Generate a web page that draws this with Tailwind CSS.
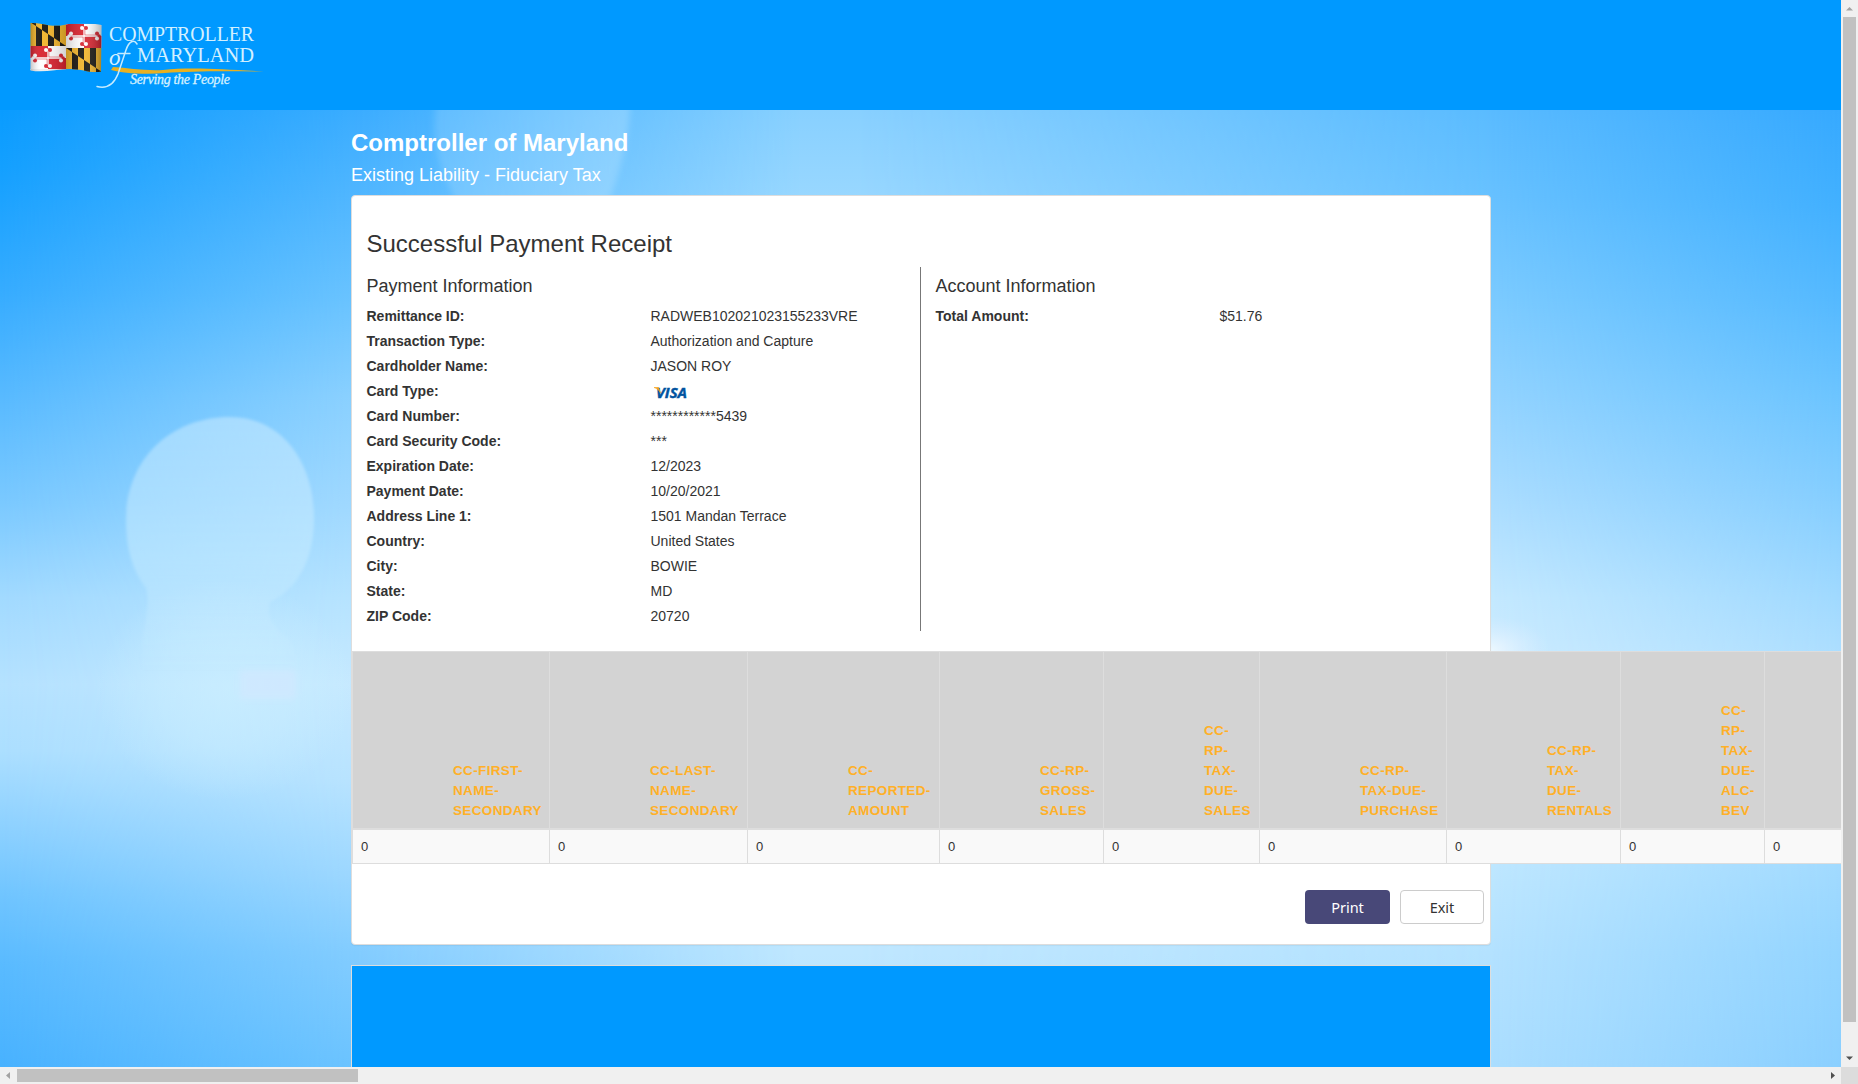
<!DOCTYPE html>
<html lang="en">
<head>
<meta charset="utf-8">
<title>Comptroller of Maryland</title>
<script src="https://cdn.jsdelivr.net/npm/@tailwindcss/browser@4"></script>
</head>
<body class="grid h-[1084px] w-[1858px] grid-cols-[1841px_17px] grid-rows-[1067px_17px] overflow-hidden bg-[#f0f0f0] font-['Liberation_Sans',Arial,sans-serif] text-sm text-[#333]">

<main class="relative isolate overflow-hidden">
  <!-- sky backdrop: vertical colour ramps blended from column to column -->
  <svg class="absolute inset-0 -z-10" width="1841" height="1067" viewBox="0 0 1841 1067">
    <defs>
      <linearGradient id="c0" gradientUnits="userSpaceOnUse" x1="0" y1="110" x2="0" y2="1067"><stop offset="0" stop-color="#0a9cff"/><stop offset=".06" stop-color="#14a0ff"/><stop offset=".19" stop-color="#36acff"/><stop offset=".3" stop-color="#58baff"/><stop offset=".41" stop-color="#7ac9ff"/><stop offset=".51" stop-color="#a2daff"/><stop offset=".6" stop-color="#b5e2ff"/><stop offset=".67" stop-color="#acdfff"/><stop offset=".75" stop-color="#8dd1ff"/><stop offset=".82" stop-color="#70c5ff"/><stop offset=".89" stop-color="#5abbff"/><stop offset="1" stop-color="#48b2ff"/></linearGradient>
      <linearGradient id="c1" gradientUnits="userSpaceOnUse" x1="0" y1="110" x2="0" y2="1067"><stop offset="0" stop-color="#3aacff"/><stop offset=".1" stop-color="#52b7ff"/><stop offset=".2" stop-color="#6ac3ff"/><stop offset=".3" stop-color="#8ad0ff"/><stop offset=".41" stop-color="#9fd8ff"/><stop offset=".51" stop-color="#b6e3ff"/><stop offset=".6" stop-color="#c6e9ff"/><stop offset=".7" stop-color="#b8e3ff"/><stop offset=".79" stop-color="#9fd8ff"/><stop offset=".88" stop-color="#82ccff"/><stop offset="1" stop-color="#6bc3ff"/></linearGradient>
      <linearGradient id="c2" gradientUnits="userSpaceOnUse" x1="0" y1="110" x2="0" y2="1067"><stop offset="0" stop-color="#88d0ff"/><stop offset=".09" stop-color="#98d7ff"/><stop offset=".5" stop-color="#c6eaff"/><stop offset=".88" stop-color="#bfe7ff"/><stop offset="1" stop-color="#b4e2ff"/></linearGradient>
      <linearGradient id="c3" gradientUnits="userSpaceOnUse" x1="0" y1="110" x2="0" y2="1067"><stop offset="0" stop-color="#5abbff"/><stop offset=".09" stop-color="#67c1ff"/><stop offset=".2" stop-color="#7ccbff"/><stop offset=".3" stop-color="#92d3ff"/><stop offset=".41" stop-color="#abddff"/><stop offset=".51" stop-color="#c4e9ff"/><stop offset=".58" stop-color="#cdecff"/><stop offset=".79" stop-color="#bee7ff"/><stop offset=".88" stop-color="#b4e2ff"/><stop offset="1" stop-color="#abdeff"/></linearGradient>
      <linearGradient id="c4" gradientUnits="userSpaceOnUse" x1="0" y1="110" x2="0" y2="1067"><stop offset="0" stop-color="#36a9ff"/><stop offset=".1" stop-color="#42b0ff"/><stop offset=".2" stop-color="#55b9ff"/><stop offset=".3" stop-color="#6cc4ff"/><stop offset=".41" stop-color="#86ceff"/><stop offset=".51" stop-color="#a0d9ff"/><stop offset=".58" stop-color="#afdfff"/><stop offset=".79" stop-color="#a1daff"/><stop offset=".88" stop-color="#93d4ff"/><stop offset="1" stop-color="#8acfff"/></linearGradient>
      <linearGradient id="f"><stop offset="0" stop-color="#000"/><stop offset="1" stop-color="#fff"/></linearGradient>
      <linearGradient id="g1" gradientUnits="userSpaceOnUse" x1="0" x2="351" y1="0" y2="0" href="#f"/>
      <linearGradient id="g2" gradientUnits="userSpaceOnUse" x1="351" x2="800" y1="0" y2="0" href="#f"/>
      <linearGradient id="g3" gradientUnits="userSpaceOnUse" x1="860" x2="1490" y1="0" y2="0" href="#f"/>
      <linearGradient id="g4" gradientUnits="userSpaceOnUse" x1="1490" x2="1841" y1="0" y2="0" href="#f"/>
      <mask id="m1"><rect width="1841" height="1067" fill="url(#g1)"/></mask>
      <mask id="m2"><rect width="1841" height="1067" fill="url(#g2)"/></mask>
      <mask id="m3"><rect width="1841" height="1067" fill="url(#g3)"/></mask>
      <mask id="m4"><rect width="1841" height="1067" fill="url(#g4)"/></mask>
      <linearGradient id="person" gradientUnits="userSpaceOnUse" x1="0" y1="415" x2="0" y2="670"><stop offset="0" stop-color="#d5efff" stop-opacity=".48"/><stop offset=".55" stop-color="#d0f0ff" stop-opacity=".42"/><stop offset=".8" stop-color="#d0f0ff" stop-opacity=".22"/><stop offset="1" stop-color="#d0f0ff" stop-opacity="0"/></linearGradient>
      <radialGradient id="torso"><stop offset="0" stop-color="#cdf0ff" stop-opacity=".6"/><stop offset=".5" stop-color="#cdf0ff" stop-opacity=".4"/><stop offset="1" stop-color="#cdf0ff" stop-opacity="0"/></radialGradient>
      <linearGradient id="head2" gradientUnits="userSpaceOnUse" x1="430" y1="0" x2="630" y2="0"><stop offset="0" stop-color="#d0eeff" stop-opacity=".18"/><stop offset="1" stop-color="#d0eeff" stop-opacity=".28"/></linearGradient>
      <radialGradient id="glow"><stop offset="0" stop-color="#fff" stop-opacity=".65"/><stop offset="1" stop-color="#e6eeff" stop-opacity="0"/></radialGradient>
      <filter id="soft" x="-10%" y="-10%" width="120%" height="120%"><feGaussianBlur stdDeviation="1.5"/></filter>
      <filter id="softer" x="-20%" y="-20%" width="140%" height="140%"><feGaussianBlur stdDeviation="3"/></filter>
    </defs>
    <rect width="1841" height="1067" fill="url(#c0)"/>
    <rect width="1841" height="1067" fill="url(#c1)" mask="url(#m1)"/>
    <rect width="1841" height="1067" fill="url(#c2)" mask="url(#m2)"/>
    <rect width="1841" height="1067" fill="url(#c3)" mask="url(#m3)"/>
    <rect width="1841" height="1067" fill="url(#c4)" mask="url(#m4)"/>
    <ellipse cx="225" cy="690" rx="130" ry="110" fill="url(#torso)"/>
    <path d="M126 520C126 460 170 417 230 417C282 417 314 462 314 518C314 562 296 590 270 602C266 616 272 628 290 640L304 680H142L142 640C146 620 150 600 146 588C132 570 126 548 126 520Z" fill="url(#person)" filter="url(#soft)"/>
    <path d="M438 90H630C632 130 622 165 606 210H462C440 175 428 140 438 90Z" fill="url(#head2)" filter="url(#softer)"/>
    <rect x="240" y="670" width="56" height="29" fill="#d2e8ff" opacity=".7" filter="url(#softer)"/>
    <ellipse cx="1490" cy="650" rx="60" ry="34" fill="url(#glow)"/>
  </svg>

  <header class="h-[110px] bg-[#0099ff]">
    <svg class="block" width="300" height="110" viewBox="0 0 300 110">
      <defs>
        <clipPath id="flag"><path d="M30.500 23C42 22 50 28 64 25C78 22 90 23 101.500 25L101 71.500C92 74 83 69 70 69C56 69 44 73 30.500 70.500Z"/></clipPath>
        <g id="calvert">
          <rect width="36" height="24" fill="#f2b52a"/>
          <path d="M0 0H6V4L0 0ZM12 0H18V12L12 8ZM24 0H30V20L24 16ZM6 4L12 8V24H6ZM18 12L24 16V24H18ZM30 20L36 24H30Z" fill="#17150f"/>
        </g>
        <g id="crossland">
          <rect width="36" height="24" fill="#fff"/>
          <path d="M0 0H18V12H36V24H18V12H0Z" fill="#d8222e"/>
          <path d="M18 2.500V12H33M18 12" fill="none" stroke="#d8222e" stroke-width="2.400"/>
          <path d="M3 12H18V22" fill="none" stroke="#d8222e" stroke-width="2.400"/>
          <path d="M18 3V12H4M18 12H32M18 12V21" fill="none" stroke="#fff" stroke-width="1.300"/>
          <g fill="#d8222e"><circle cx="20" cy="4" r="2"/><circle cx="31" cy="9.600" r="2"/><circle cx="33" cy="12" r="1.800"/><circle cx="5" cy="14.400" r="2"/><circle cx="16" cy="20" r="2"/></g>
          <g fill="#fff"><circle cx="16" cy="4" r="2"/><circle cx="5" cy="9.600" r="2"/><circle cx="3" cy="12" r="1.700"/><circle cx="31" cy="14.400" r="2"/><circle cx="20" cy="20" r="2"/></g>
        </g>
        <linearGradient id="shade"><stop offset="0" stop-color="#000" stop-opacity=".25"/><stop offset=".15" stop-color="#fff" stop-opacity=".05"/><stop offset=".5" stop-color="#000" stop-opacity=".18"/><stop offset=".75" stop-color="#fff" stop-opacity=".08"/><stop offset="1" stop-color="#000" stop-opacity=".3"/></linearGradient>
      </defs>
      <g clip-path="url(#flag)">
        <use href="#calvert" x="30" y="22" />
        <use href="#crossland" x="66" y="24"/>
        <use href="#crossland" x="30" y="46"/>
        <rect x="30" y="69" width="36" height="4" fill="#eee"/>
        <use href="#calvert" x="66" y="48"/>
        <rect x="30" y="20" width="72" height="54" fill="url(#shade)"/>
      </g>
      <path d="M113 67C128 68 145 71 163 70C190 67 220 69 264 71.500C225 71 190 71 165 73C145 75 122 73 111 70Z" fill="#e8b021"/>
      <g fill="#d3f0ff" font-family="'Liberation Serif',serif">
        <text x="109" y="41" font-size="20.500" textLength="145" lengthAdjust="spacingAndGlyphs">COMPTROLLER</text>
        <text x="137" y="61.800" font-size="20" textLength="117" lengthAdjust="spacingAndGlyphs">MARYLAND</text>
        <text x="130" y="83.500" font-size="14" font-style="italic" stroke="#d3f0ff" stroke-width=".3" textLength="100" lengthAdjust="spacing">Serving the People</text>
        <text x="109" y="65" font-size="23" font-style="italic">o</text>
      </g>
      <path d="M137 44C134 39 129 41 126 50L118 74C114 84 107 89 97 86.500M118 53.500H130" fill="none" stroke="#c5ebff" stroke-width="1.500" stroke-linecap="round"/>
    </svg>
  </header>

  <div class="ml-[351px] w-[1140px]">
    <h1 class="pt-[19px] text-2xl leading-[28px] font-bold text-white">Comptroller of Maryland</h1>
    <h2 class="mt-[7px] h-[31px] text-lg leading-[22px] text-white">Existing Liability - Fiduciary Tax</h2>

    <section class="h-[750px] rounded border border-[#ddd] bg-white shadow-[0_1px_1px_rgba(0,0,0,0.05)]">
      <h3 class="h-[71px] pt-[34px] pl-[14.500px] text-2xl leading-[28px]">Successful Payment Receipt</h3>
      <div class="flex h-[364px]">
        <div class="w-[569px] border-r border-[#777] pl-[14.500px]">
          <h4 class="h-[37px] pt-[9px] text-lg leading-5">Payment Information</h4>
          <dl class="grid auto-rows-[25px] grid-cols-[284px_1fr] leading-[25px] [&>dt]:font-bold">
            <dt>Remittance ID:</dt><dd>RADWEB102021023155233VRE</dd>
            <dt>Transaction Type:</dt><dd>Authorization and Capture</dd>
            <dt>Cardholder Name:</dt><dd>JASON ROY</dd>
            <dt>Card Type:</dt>
            <dd>
              <svg class="block" width="40" height="25" viewBox="0 0 40 25">
                <text x="5" y="19" font-size="14" font-weight="bold" font-style="italic" font-family="'Open Sans',sans-serif" fill="#00539f" stroke="#00539f" stroke-width=".4" textLength="31" lengthAdjust="spacingAndGlyphs">VISA</text>
                <path d="M3 8.500H7.500L9.500 14C8 11 6 9.500 3 8.500Z" fill="#f7a21b" stroke="#f7a21b" stroke-width=".6"/>
              </svg>
            </dd>
            <dt>Card Number:</dt><dd>************5439</dd>
            <dt>Card Security Code:</dt><dd>***</dd>
            <dt>Expiration Date:</dt><dd>12/2023</dd>
            <dt>Payment Date:</dt><dd>10/20/2021</dd>
            <dt>Address Line 1:</dt><dd>1501 Mandan Terrace</dd>
            <dt>Country:</dt><dd>United States</dd>
            <dt>City:</dt><dd>BOWIE</dd>
            <dt>State:</dt><dd>MD</dd>
            <dt>ZIP Code:</dt><dd>20720</dd>
          </dl>
        </div>
        <div class="flex-1 pl-[14.500px]">
          <h4 class="h-[37px] pt-[9px] text-lg leading-5">Account Information</h4>
          <dl class="grid grid-cols-[284px_1fr] leading-[25px]">
            <dt class="font-bold">Total Amount:</dt><dd>$51.76</dd>
          </dl>
        </div>
      </div>

      <table class="mt-5 w-[1573px] table-fixed border-separate border-spacing-0 border-t border-l border-[#ddd] text-left">
        <colgroup><col class="w-[197px]"><col class="w-[198px]"><col class="w-[192px]"><col class="w-[164px]"><col class="w-[156px]"><col class="w-[187px]"><col class="w-[174px]"><col class="w-[144px]"><col class="w-[160px]"></colgroup>
        <thead class="bg-[#d3d3d3] text-[#ffb027]">
          <tr class="h-[178px] align-bottom leading-5 tracking-[0.35px] [&>th]:border-r [&>th]:border-b-2 [&>th]:border-[#ddd] [&>th]:pb-[7px] [&>th]:pl-[100px] [&>th]:text-[13.500px] [&>th]:whitespace-nowrap">
            <th>CC-FIRST-<br>NAME-<br>SECONDARY</th>
            <th>CC-LAST-<br>NAME-<br>SECONDARY</th>
            <th>CC-<br>REPORTED-<br>AMOUNT</th>
            <th>CC-RP-<br>GROSS-<br>SALES</th>
            <th>CC-<br>RP-<br>TAX-<br>DUE-<br>SALES</th>
            <th>CC-RP-<br>TAX-DUE-<br>PURCHASE</th>
            <th>CC-RP-<br>TAX-<br>DUE-<br>RENTALS</th>
            <th>CC-<br>RP-<br>TAX-<br>DUE-<br>ALC-<br>BEV</th>
            <th></th>
          </tr>
        </thead>
        <tbody class="bg-[#f9f9f9]">
          <tr class="h-[34px] text-[13px] leading-5 [&>td]:border-r [&>td]:border-b [&>td]:border-[#ddd] [&>td]:pl-2">
            <td>0</td><td>0</td><td>0</td><td>0</td><td>0</td><td>0</td><td>0</td><td>0</td><td>0</td>
          </tr>
        </tbody>
      </table>

      <div class="mt-[26px] flex justify-end gap-[10px] pr-[6px] font-['Noto_Sans','Open_Sans',sans-serif] text-[14.500px]">
        <button class="h-[34px] w-[85px] rounded bg-[#484878] text-white">Print</button>
        <button class="h-[34px] w-[84px] rounded border border-[#ccc] bg-white text-[#333]">Exit</button>
      </div>
    </section>

    <footer class="mt-5 h-[200px] border border-[#ddd] bg-[#0099ff]"></footer>
  </div>
</main>

<!-- vertical scrollbar -->
<div class="flex flex-col items-center justify-between bg-[#f0f0f0]">
  <svg class="h-[17px]" width="17" height="17"><path d="M5 10.500H12L8.500 7Z" fill="#a3a3a3"/></svg>
  <div class="mb-auto h-[1005px] w-[13px] bg-[#c1c1c1]"></div>
  <svg class="h-[17px]" width="17" height="17"><path d="M5 6.500H12L8.500 10Z" fill="#505050"/></svg>
</div>
<!-- horizontal scrollbar -->
<div class="flex items-center bg-[#f0f0f0]">
  <svg width="17" height="17"><path d="M10 5V12L6 8.500Z" fill="#a3a3a3"/></svg>
  <div class="mr-auto h-[13px] w-[341px] bg-[#c1c1c1]"></div>
  <svg width="17" height="17"><path d="M7 5V12L11 8.500Z" fill="#505050"/></svg>
</div>
<div class="bg-[#dcdcdc]"></div>
</body>
</html>
